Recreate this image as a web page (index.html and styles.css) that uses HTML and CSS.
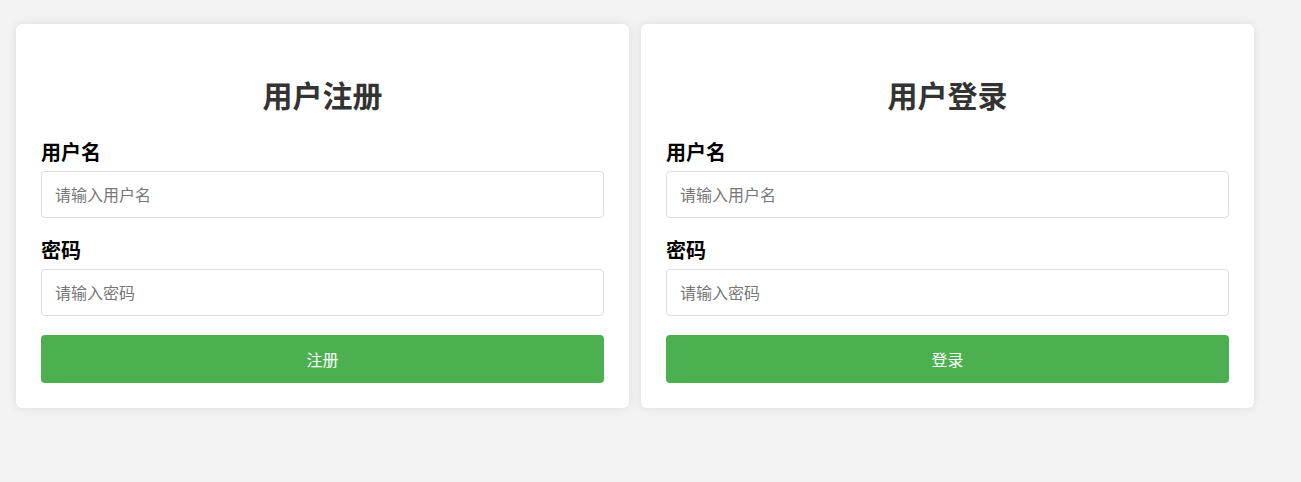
FILE: index.html
```html
<!DOCTYPE html>
<html lang="zh-CN">
<head>
    <meta charset="UTF-8">
    <meta name="viewport" content="width=device-width, initial-scale=1.0">
    <title>用户注册与登录</title>
    <link rel="stylesheet" href="styles.css">
</head>
<body>
    <div class="wrapper">
        <div class="container">
            <h2>用户注册</h2>
            <form id="registerForm">
                <label for="regUser">用户名</label>
                <input type="text" id="regUser" placeholder="请输入用户名">
                <label for="regPass">密码</label>
                <input type="password" id="regPass" placeholder="请输入密码">
                <button type="submit">注册</button>
            </form>
        </div>
        <div class="container">
            <h2>用户登录</h2>
            <form id="loginForm">
                <label for="loginUser">用户名</label>
                <input type="text" id="loginUser" placeholder="请输入用户名">
                <label for="loginPass">密码</label>
                <input type="password" id="loginPass" placeholder="请输入密码">
                <button type="submit">登录</button>
            </form>
        </div>
    </div>
</body>
</html>
```

FILE: styles.css
```css
body {
    font-family: "Noto Sans CJK SC", "Liberation Sans", sans-serif;
    background-color: #f3f3f3;
    margin: 0;
    padding: 24px 16px;
}
.wrapper {
    display: flex;
    gap: 12px;
}
.container {
    background-color: #fff;
    padding: 25px;
    border-radius: 6px;
    box-shadow: 0 0 10px rgba(0, 0, 0, 0.1);
    width: 563px;
}
h2 {
    color: #333;
    text-align: center;
    font-size: 30px;
    line-height: 36px;
    margin: 27px 0 29px;
}
form {
    display: flex;
    flex-direction: column;
}
label {
    color: #000;
    font-weight: bold;
    font-size: 20px;
    line-height: 22px;
    margin-bottom: 8px;
}
input {
    height: 47px;
    box-sizing: border-box;
    padding: 0 13px 2px;
    border: 1px solid #ddd;
    border-radius: 4px;
    font-family: inherit;
    font-size: 16px;
    margin-bottom: 21px;
}
input::placeholder {
    color: #777;
}
input[type="password"] {
    margin-bottom: 19px;
}
button {
    background-color: #4CAF50;
    color: white;
    border: none;
    height: 48px;
    padding-bottom: 2px;
    font-family: inherit;
    font-size: 16px;
    border-radius: 4px;
    cursor: pointer;
}
button:hover {
    background-color: #45a049;
}
```
